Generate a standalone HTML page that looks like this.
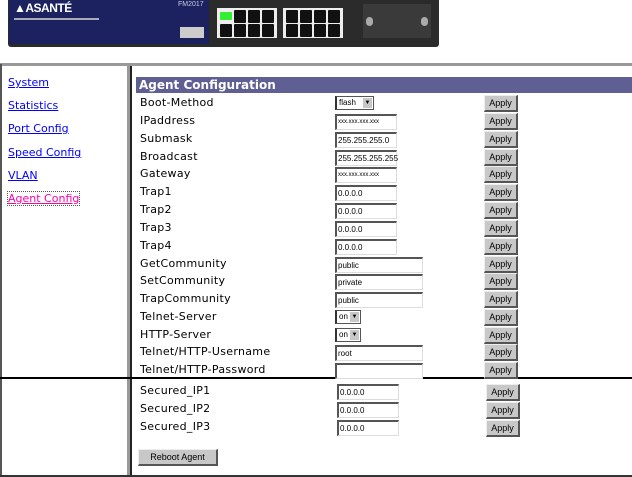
<!DOCTYPE html>
<html><head><style>
body{margin:0;width:632px;height:477px;background:#fff;position:relative;overflow:hidden;font-family:"DejaVu Sans",Verdana,sans-serif}
.a{position:absolute}
.lbl{position:absolute;left:140px;font-size:11px;letter-spacing:0.3px;color:#000;line-height:14px}
.in{position:absolute;height:13px;border:1px solid #888;border-right-color:#ddd;border-bottom-color:#ddd;border-top:2px solid #555;border-left:2px solid #555;background:#fff;font:8px "Liberation Sans",sans-serif;line-height:13px;padding-left:1px;box-sizing:content-box}
.btn{position:absolute;width:31px;height:14px;background:#c8c8c8;border:1px solid #eee;border-right:2px solid #555;border-bottom:2px solid #555;font:9px "Liberation Sans",sans-serif;text-align:center;line-height:14px;color:#000}
.sel{position:absolute;height:12px;border:1px solid #555;border-left:2px solid #333;background:#fff;font:8px "Liberation Sans",sans-serif;line-height:12px;padding-left:2px}
.sel i{position:absolute;right:1px;top:1px;width:9px;height:10px;background:#c8c8c8;font-style:normal;font-size:6px;text-align:center;line-height:10px}
.nav{position:absolute;left:8px;font-size:11px;color:#00f;text-decoration:underline}
.port{position:absolute;width:12px;height:13px;background:#111;border-radius:1px}
</style></head><body>
<!-- device -->
<div class="a" style="left:8px;top:0;width:431px;height:47px;background:#2b2b2b;border-radius:0 0 3px 3px"></div>
<div class="a" style="left:9px;top:0;width:200px;height:44px;background:#1c2260"></div>
<div class="a" style="left:14px;top:1px;color:#fff;font:bold 12px 'Liberation Sans',sans-serif;letter-spacing:-0.5px">▲ASANTÉ</div>
<div class="a" style="left:14px;top:18px;width:85px;height:2px;background:#aab"></div>
<div class="a" style="left:178px;top:1px;color:#ccd;font:7px 'Liberation Sans',sans-serif">FM2017</div>
<div class="a" style="left:180px;top:27px;width:24px;height:11px;background:#ccc"></div>
<div class="a" style="left:217px;top:8px;width:60px;height:30px;background:#eee"></div>
<div class="a" style="left:283px;top:8px;width:60px;height:30px;background:#eee"></div>
<div class="port" style="left:220px;top:10px;background:#3e3;height:8px;top:12px"></div>
<div class="port" style="left:234px;top:10px"></div><div class="port" style="left:248px;top:10px"></div><div class="port" style="left:262px;top:10px"></div>
<div class="port" style="left:220px;top:24px"></div><div class="port" style="left:234px;top:24px"></div><div class="port" style="left:248px;top:24px"></div><div class="port" style="left:262px;top:24px"></div>
<div class="port" style="left:286px;top:10px"></div><div class="port" style="left:300px;top:10px"></div><div class="port" style="left:314px;top:10px"></div><div class="port" style="left:328px;top:10px"></div>
<div class="port" style="left:286px;top:24px"></div><div class="port" style="left:300px;top:24px"></div><div class="port" style="left:314px;top:24px"></div><div class="port" style="left:328px;top:24px"></div>
<div class="a" style="left:363px;top:4px;width:68px;height:34px;background:#3a3a3a"></div>
<div class="a" style="left:366px;top:17px;width:7px;height:9px;background:#aaa;border-radius:4px"></div>
<div class="a" style="left:421px;top:17px;width:7px;height:9px;background:#aaa;border-radius:4px"></div>
<!-- frames -->
<div class="a" style="left:0;top:63px;width:632px;height:3px;background:#999"></div>
<div class="a" style="left:0;top:64px;width:2px;height:413px;background:#555"></div>
<div class="a" style="left:127px;top:64px;width:3px;height:413px;background:#999"></div>
<div class="a" style="left:130px;top:66px;width:2px;height:411px;background:#222"></div>
<div class="a" style="left:0;top:377px;width:632px;height:2px;background:#000"></div>
<div class="a" style="left:0;top:475px;width:632px;height:2px;background:#333"></div>
<!-- nav -->
<div class="nav" style="top:76px">System</div>
<div class="nav" style="top:99px">Statistics</div>
<div class="nav" style="top:122px">Port Config</div>
<div class="nav" style="top:146px">Speed Config</div>
<div class="nav" style="top:169px">VLAN</div>
<div class="nav" style="top:192px;color:#f0a;outline:1px dotted #555">Agent Config</div>
<!-- header -->
<div class="a" style="left:136px;top:77px;width:496px;height:16px;background:#5f5f93;color:#fff;font:bold 12px 'DejaVu Sans',sans-serif;line-height:16px;padding-left:3px">Agent Configuration</div>

<div class="lbl" style="top:96px">Boot-Method</div><div class="sel" style="left:335px;top:96px;width:34px">flash<i>▼</i></div><div class="btn" style="left:484px;top:95px">Apply</div>
<div class="lbl" style="top:114px">IPaddress</div><div class="in" style="left:335px;top:114px;width:58px;font-size:6px">xxx.xxx.xxx.xxx</div><div class="btn" style="left:484px;top:113px">Apply</div>
<div class="lbl" style="top:132px">Submask</div><div class="in" style="left:335px;top:132px;width:58px">255.255.255.0</div><div class="btn" style="left:484px;top:131px">Apply</div>
<div class="lbl" style="top:150px">Broadcast</div><div class="in" style="left:335px;top:150px;width:58px">255.255.255.255</div><div class="btn" style="left:484px;top:149px">Apply</div>
<div class="lbl" style="top:167px">Gateway</div><div class="in" style="left:335px;top:167px;width:58px;font-size:6px">xxx.xxx.xxx.xxx</div><div class="btn" style="left:484px;top:166px">Apply</div>
<div class="lbl" style="top:185px">Trap1</div><div class="in" style="left:335px;top:185px;width:58px">0.0.0.0</div><div class="btn" style="left:484px;top:184px">Apply</div>
<div class="lbl" style="top:203px">Trap2</div><div class="in" style="left:335px;top:203px;width:58px">0.0.0.0</div><div class="btn" style="left:484px;top:202px">Apply</div>
<div class="lbl" style="top:221px">Trap3</div><div class="in" style="left:335px;top:221px;width:58px">0.0.0.0</div><div class="btn" style="left:484px;top:220px">Apply</div>
<div class="lbl" style="top:239px">Trap4</div><div class="in" style="left:335px;top:239px;width:58px">0.0.0.0</div><div class="btn" style="left:484px;top:238px">Apply</div>
<div class="lbl" style="top:257px">GetCommunity</div><div class="in" style="left:335px;top:257px;width:84px">public</div><div class="btn" style="left:484px;top:256px">Apply</div>
<div class="lbl" style="top:274px">SetCommunity</div><div class="in" style="left:335px;top:274px;width:84px">private</div><div class="btn" style="left:484px;top:273px">Apply</div>
<div class="lbl" style="top:292px">TrapCommunity</div><div class="in" style="left:335px;top:292px;width:84px">public</div><div class="btn" style="left:484px;top:291px">Apply</div>
<div class="lbl" style="top:310px">Telnet-Server</div><div class="sel" style="left:335px;top:310px;width:21px">on<i>▼</i></div><div class="btn" style="left:484px;top:309px">Apply</div>
<div class="lbl" style="top:328px">HTTP-Server</div><div class="sel" style="left:335px;top:328px;width:21px">on<i>▼</i></div><div class="btn" style="left:484px;top:327px">Apply</div>
<div class="lbl" style="top:345px">Telnet/HTTP-Username</div><div class="in" style="left:335px;top:345px;width:84px">root</div><div class="btn" style="left:484px;top:344px">Apply</div>
<div class="lbl" style="top:363px">Telnet/HTTP-Password</div><div class="in" style="left:335px;top:363px;width:84px"></div><div class="btn" style="left:484px;top:362px">Apply</div>

<div class="lbl" style="top:384px">Secured_IP1</div><div class="in" style="left:337px;top:384px;width:58px">0.0.0.0</div><div class="btn" style="left:486px;top:384px">Apply</div>
<div class="lbl" style="top:402px">Secured_IP2</div><div class="in" style="left:337px;top:402px;width:58px">0.0.0.0</div><div class="btn" style="left:486px;top:402px">Apply</div>
<div class="lbl" style="top:420px">Secured_IP3</div><div class="in" style="left:337px;top:420px;width:58px">0.0.0.0</div><div class="btn" style="left:486px;top:420px">Apply</div>
<div class="btn" style="left:138px;top:449px;width:77px">Reboot Agent</div>
</body></html>
